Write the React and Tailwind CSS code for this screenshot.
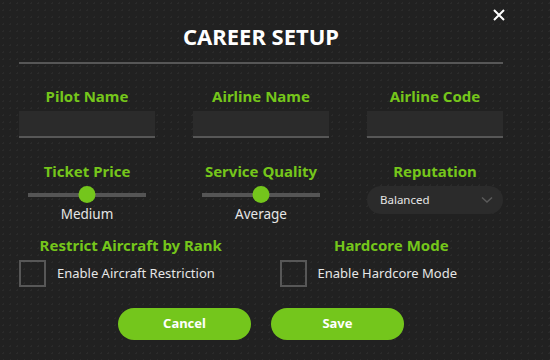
import React, { useState } from "react";

const FONT = { fontFamily: '"Noto Sans", "Open Sans", sans-serif' };

const Slider = ({ value }) => (
  <div className="flex flex-col items-center">
    <div className="relative mt-[5px] h-[17px] w-full px-[9px] flex items-center">
      <div className="h-[4px] w-full bg-[#555555]" />
      <div className="absolute left-1/2 top-0 h-[17px] w-[17px] -translate-x-1/2 rounded-full bg-[#74c61c]" />
    </div>
    <div className="mt-[1px] h-[20px] text-[13.5px] leading-[20px] text-[#e6e6e6]">{value}</div>
  </div>
);

const Label = ({ children }) => (
  <div className="h-[20px] text-center text-[15px] font-bold leading-[20px] text-[#75c61b]">
    {children}
  </div>
);

const TextBox = () => (
  <div className="mt-[5px] h-[27px] border-b-2 border-[#575757] bg-[#2b2b2b]" />
);

export default function App() {
  const [restrict, setRestrict] = useState(false);
  const [hardcore, setHardcore] = useState(false);

  return (
    <div
      className="relative h-[360px] w-[550px] overflow-hidden bg-[#212121] bg-[radial-gradient(#2a2a2a_1px,transparent_1px)] bg-[length:7px_7px]"
      style={FONT}
    >
      {/* Close */}
      <button className="absolute right-[45px] top-[9px] h-[12px] w-[12px] text-white">
        <svg viewBox="0 0 12 12" className="h-[12px] w-[12px]">
          <path d="M1 1L11 11M11 1L1 11" stroke="currentColor" strokeWidth="2" />
        </svg>
      </button>

      <div className="ml-[19px] flex w-[484px] flex-col">
        {/* Header */}
        <h1 className="mt-[21px] h-[30px] text-center text-[22px] font-bold leading-[30px] text-white">
          CAREER SETUP
        </h1>
        <div className="mt-[11px] h-[2px] bg-[#575757]" />

        {/* Names */}
        <div className="mt-[22px] grid grid-cols-3 gap-x-[38px]">
          <div>
            <Label>Pilot Name</Label>
            <TextBox />
          </div>
          <div>
            <Label>Airline Name</Label>
            <TextBox />
          </div>
          <div>
            <Label>Airline Code</Label>
            <TextBox />
          </div>
        </div>

        {/* Settings */}
        <div className="mt-[23px] grid grid-cols-3 gap-x-[38px]">
          <div>
            <Label>Ticket Price</Label>
            <Slider value="Medium" />
          </div>
          <div>
            <Label>Service Quality</Label>
            <Slider value="Average" />
          </div>
          <div>
            <Label>Reputation</Label>
            <div className="mt-[5px] flex h-[28px] items-center justify-between rounded-full bg-[#2b2b2b] pl-[13px] pr-[10px]">
              <span className="text-[11.5px] text-[#e6e6e6]">Balanced</span>
              <svg viewBox="0 0 12 8" className="h-[8px] w-[12px]">
                <path d="M1 1.5L6 6L11 1.5" fill="none" stroke="#5a5a5a" strokeWidth="1.5" />
              </svg>
            </div>
          </div>
        </div>

        {/* Toggles */}
        <div className="mt-[11px] grid grid-cols-2 gap-x-[37px]">
          <div>
            <Label>Restrict Aircraft by Rank</Label>
            <label className="mt-[5px] flex items-center gap-[11px]">
              <span
                onClick={() => setRestrict(!restrict)}
                className={`h-[27px] w-[27px] border-2 border-[#575757] ${restrict ? "bg-[#74c61c]" : ""}`}
              />
              <span className="text-[13px] text-[#e6e6e6]">Enable Aircraft Restriction</span>
            </label>
          </div>
          <div>
            <Label>Hardcore Mode</Label>
            <label className="mt-[5px] flex items-center gap-[11px]">
              <span
                onClick={() => setHardcore(!hardcore)}
                className={`h-[27px] w-[27px] border-2 border-[#575757] ${hardcore ? "bg-[#74c61c]" : ""}`}
              />
              <span className="text-[13px] text-[#e6e6e6]">Enable Hardcore Mode</span>
            </label>
          </div>
        </div>

        {/* Buttons */}
        <div className="mt-[21px] flex justify-center gap-[20px]">
          <button className="h-[32px] w-[133px] rounded-full bg-[#74c61c] text-[13px] font-bold text-white">
            Cancel
          </button>
          <button className="h-[32px] w-[133px] rounded-full bg-[#74c61c] text-[13px] font-bold text-white">
            Save
          </button>
        </div>
      </div>
    </div>
  );
}
